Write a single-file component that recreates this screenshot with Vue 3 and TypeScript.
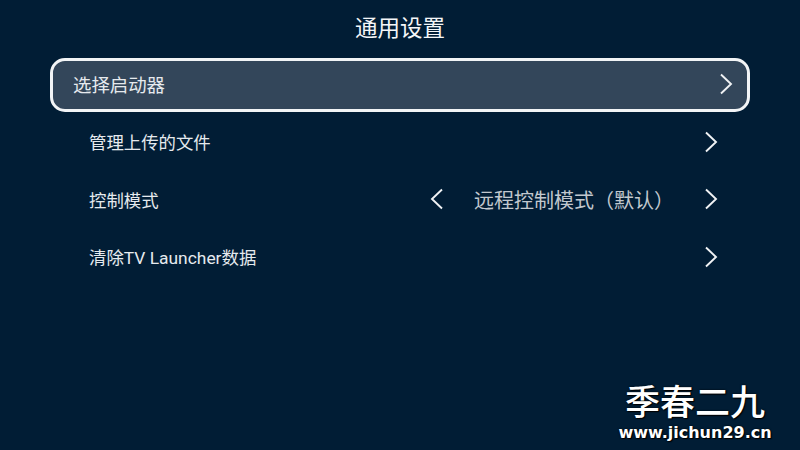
<script setup lang="ts">
interface Row { label: string; value?: string; focused?: boolean }
const rows: Row[] = [
  { label: '选择启动器', focused: true },
  { label: '管理上传的文件' },
  { label: '控制模式', value: '远程控制模式（默认）' },
  { label: '清除TV Launcher数据' },
]
</script>

<template>
  <div class="page">
    <h1 class="title">通用设置</h1>
    <ul class="list">
      <li v-for="row in rows" :key="row.label" class="row" :class="{ focused: row.focused }">
        <span class="label">{{ row.label }}</span>
        <template v-if="row.value">
          <svg class="chev left" viewBox="0 0 14 22"><path d="M12 1.5 2 11l10 9.5" /></svg>
          <span class="value">{{ row.value }}</span>
        </template>
        <svg class="chev" viewBox="0 0 14 22"><path d="M2 1.5 12 11 2 20.5" /></svg>
      </li>
    </ul>
    <div class="mark">
      <div class="mark-cn">季春二九</div>
      <div class="mark-url">www.jichun29.cn</div>
    </div>
  </div>
</template>

<style>
html, body { margin: 0; background: #011d35; }
</style>

<style scoped>
.page {
  position: relative;
  width: 800px;
  height: 450px;
  overflow: hidden;
  background: #011d35;
  color: #e6eaee;
  font-family: "Roboto", "Noto Sans CJK SC", sans-serif;
  padding: 0 50px;
  box-sizing: border-box;
}
.title {
  margin: 0;
  height: 58px;
  padding-bottom: 6px;
  box-sizing: border-box;
  display: flex;
  align-items: center;
  justify-content: center;
  font-size: 22.5px;
  font-weight: 400;
  color: #f4f6f8;
}
.list {
  list-style: none;
  margin: 0;
  padding: 0;
}
.row {
  display: flex;
  align-items: center;
  height: 57.5px;
  padding: 0 32px 2px 39px;
  box-sizing: border-box;
  font-size: 17.4px;
}
.row.focused {
  height: 54px;
  margin-bottom: 2px;
  padding: 0 14px 2px 20px;
  background: #33465a;
  border: 3px solid #f2f4f6;
  border-radius: 15px;
  font-size: 18.4px;
}
.label {
  flex: 1;
}
.value {
  width: 200px;
  margin-right: 30px;
  font-size: 20px;
  color: #c2c8ce;
  white-space: nowrap;
}
.chev {
  width: 14px;
  height: 22px;
  flex: none;
  fill: none;
  stroke: #f0f2f4;
  stroke-width: 1.9;
}
.chev.left {
  margin-right: 30px;
}
.mark {
  position: absolute;
  left: 615px;
  top: 378px;
  width: 160px;
  text-align: center;
  color: #fff;
  text-shadow: 0 0 2px #000, 1px 1px 1px #000;
}
.mark-cn {
  font-family: "Noto Sans CJK SC", sans-serif;
  font-size: 35px;
  font-weight: 500;
  line-height: 44px;
}
.mark-url {
  font-family: "DejaVu Sans", sans-serif;
  font-size: 16px;
  font-weight: 700;
  line-height: 20px;
  margin-top: 1px;
  white-space: nowrap;
}
</style>
